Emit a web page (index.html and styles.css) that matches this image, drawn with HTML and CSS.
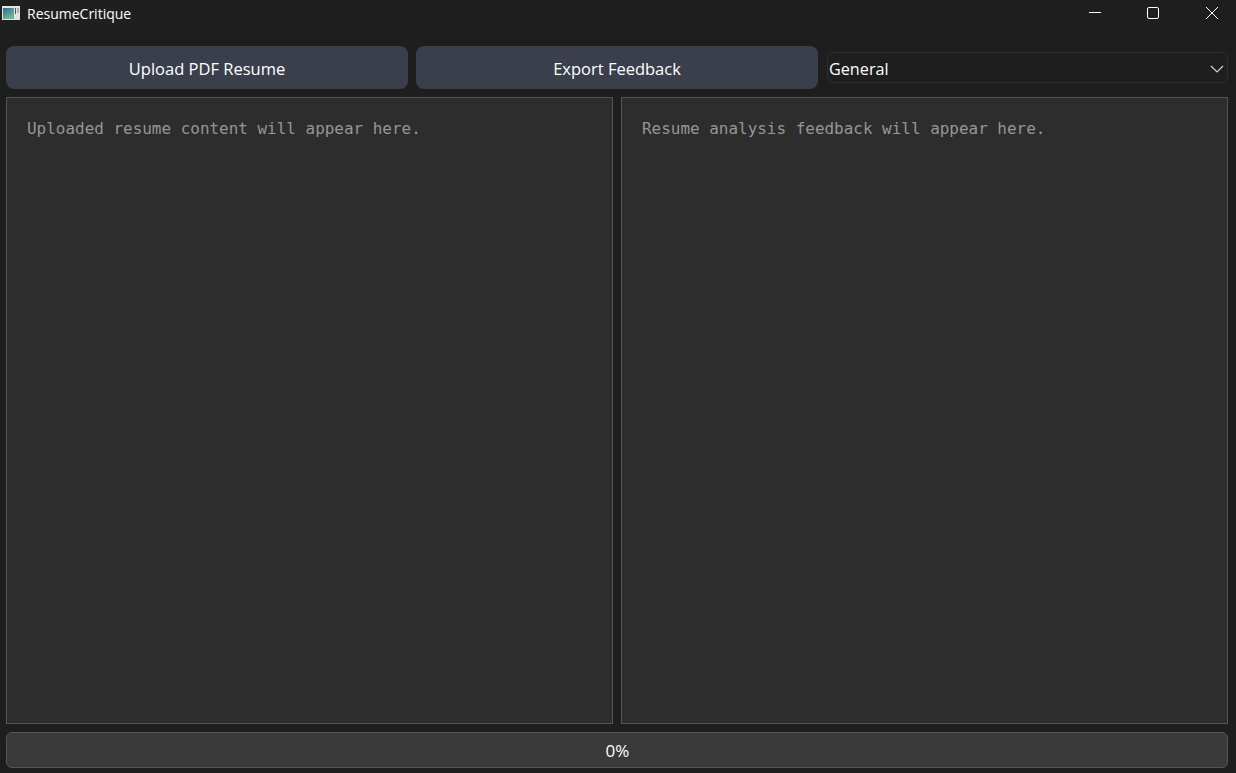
FILE: index.html
```html
<!DOCTYPE html>
<html lang="en">
<head>
<meta charset="utf-8">
<title>ResumeCritique</title>
<link rel="stylesheet" href="styles.css">
</head>
<body>
<div class="window">
  <header class="titlebar">
    <div class="title-left">
      <svg class="app-icon" width="18" height="14" viewBox="0 0 18 14">
        <defs><linearGradient id="ic" x1="0" y1="0" x2="0.5" y2="1"><stop offset="0" stop-color="#34688a"/><stop offset="1" stop-color="#6dba96"/></linearGradient></defs>
        <rect width="18" height="14" fill="#dfe4e4"/>
        <rect x="1" y="2" width="10" height="11" fill="url(#ic)"/>
        <rect x="11" y="2" width="1" height="11" fill="#7f9a98"/>
        <rect x="13" y="2" width="1" height="6" fill="#4a5a60"/>
        <rect x="15" y="2" width="2" height="5" fill="#a9b4b6"/>
      </svg>
      <span class="title-text">ResumeCritique</span>
    </div>
    <div class="win-controls">
      <button class="win-btn" aria-label="Minimize"><svg width="12" height="12" viewBox="0 0 12 12"><path d="M0 5.5H12" stroke="#fff" fill="none"/></svg></button>
      <button class="win-btn" aria-label="Maximize"><svg width="12" height="12" viewBox="0 0 12 12"><rect x="0.5" y="0.5" width="11" height="11" rx="1.5" stroke="#fff" fill="none"/></svg></button>
      <button class="win-btn" aria-label="Close"><svg width="12" height="12" viewBox="0 0 12 12"><path d="M0 0L12 12M12 0L0 12" stroke="#fff" fill="none"/></svg></button>
    </div>
  </header>
  <main class="content">
    <section class="toolbar">
      <button class="action">Upload PDF Resume</button>
      <button class="action">Export Feedback</button>
      <div class="combo">
        <span>General</span>
        <svg width="14" height="8" viewBox="0 0 14 8"><path d="M1 1L7 7L13 1" stroke="#c9d3dc" stroke-width="1.2" fill="none"/></svg>
      </div>
    </section>
    <section class="panes">
      <div class="pane">Uploaded resume content will appear here.</div>
      <div class="pane">Resume analysis feedback will appear here.</div>
    </section>
    <div class="progress">0%</div>
  </main>
</div>
</body>
</html>
```

FILE: styles.css
```css
* { box-sizing: border-box; }
html, body { margin: 0; height: 100%; background: #1e1e1e; overflow: hidden; }
body { font-family: "Open Sans", "Noto Sans", sans-serif; color: #fff; }
.window { display: flex; flex-direction: column; height: 773px; width: 1236px; overflow: hidden; }
.titlebar { height: 30px; display: flex; justify-content: space-between; align-items: flex-start; background: #1f1f1f; flex: none; }
.title-left { display: flex; align-items: center; height: 26px; padding-left: 2px; gap: 7px; }
.app-icon { display: block; }
.title-text { font-size: 14px; color: #fff; }
.win-controls { display: flex; margin-right: -5px; }
.win-btn { width: 58.5px; height: 26px; padding: 0; border: 0; background: none; display: flex; align-items: center; justify-content: center; }
.content { flex: 1; display: flex; flex-direction: column; gap: 8px; padding: 16px 8px 5px 6px; min-height: 0; }
.toolbar { display: flex; align-items: center; gap: 8px; height: 43px; flex: none; }
.action { width: 402px; height: 43px; padding: 2px 0 0; border: 0; border-radius: 8px; background: #3a3f4b; color: #fff; font: 400 16.5px "Open Sans", sans-serif; }
.combo { flex: 1; margin-left: 1px; height: 31px; border: 1px solid #2e2e2e; border-radius: 6px; background: #1e1e1e; display: flex; align-items: center; justify-content: space-between; padding: 2px 3px 0 1px; font-size: 16.2px; }
.panes { flex: 1; display: flex; gap: 8px; min-height: 0; }
.pane { flex: 1; background: #2d2d2d; border: 1px solid #555; padding: 20px; font: 15.96px/22px "DejaVu Sans Mono", monospace; color: #969696; }
.progress { height: 36px; flex: none; padding-left: 1px; background: #3a3a3a; border: 1px solid #555; border-radius: 6px; display: flex; align-items: center; justify-content: center; font-size: 17px; }
```
